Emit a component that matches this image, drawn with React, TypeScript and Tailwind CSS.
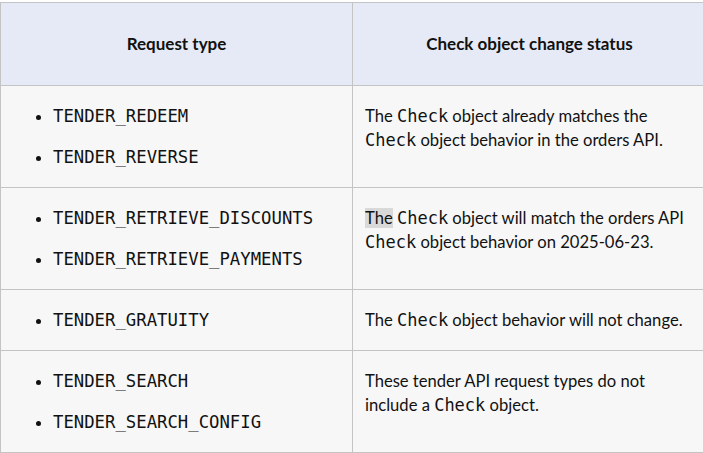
import React from "react";

const mono = "font-['DejaVu_Sans_Mono',monospace] text-[17.3px]";

function C() {
  return <code className="font-['DejaVu_Sans_Mono',monospace] text-[17px]">Check</code>;
}

const rows: { items: string[]; desc: React.ReactNode }[] = [
  {
    items: ["TENDER_REDEEM", "TENDER_REVERSE"],
    desc: (
      <>
        The <C /> object already matches the <C /> object behavior in the orders API.
      </>
    ),
  },
  {
    items: ["TENDER_RETRIEVE_DISCOUNTS", "TENDER_RETRIEVE_PAYMENTS"],
    desc: (
      <>
        <span className="bg-[#d9d9d9]">The</span> <C /> object will match the orders API <C /> object behavior on
        2025-06-23.
      </>
    ),
  },
  {
    items: ["TENDER_GRATUITY"],
    desc: (
      <>
        The <C /> object behavior will not change.
      </>
    ),
  },
  {
    items: ["TENDER_SEARCH", "TENDER_SEARCH_CONFIG"],
    desc: (
      <>
        These tender API request types do not include a <C /> object.
      </>
    ),
  },
];

export default function App() {
  return (
    <div className="w-[703px] h-[453px] overflow-hidden bg-white pt-[2px] font-['Lato',sans-serif] text-[#111]">
      <table className="w-[706px] table-fixed border-collapse">
        <colgroup>
          <col className="w-[352px]" />
          <col className="w-[354px]" />
        </colgroup>
        <thead>
          <tr className="bg-[#e6eaf6]">
            <th className="h-[83px] border border-[#c4c4c4] text-center text-[17px] font-bold">Request type</th>
            <th className="h-[83px] border border-[#c4c4c4] text-center text-[17px] font-bold">
              Check object change status
            </th>
          </tr>
        </thead>
        <tbody>
          {rows.map((r, i) => (
            <tr key={i} className="bg-[#f7f7f7]">
              <td className="border border-[#c4c4c4] px-3 pt-[18px] pb-[18px] align-top">
                <ul className="list-disc pl-10 flex flex-col gap-[17px]">
                  {r.items.map((it) => (
                    <li key={it} className={`${mono} leading-6`}>
                      {it}
                    </li>
                  ))}
                </ul>
              </td>
              <td className="border border-[#c4c4c4] px-3 pt-[18px] pb-[18px] align-top text-[16.6px] leading-6">
                {r.desc}
              </td>
            </tr>
          ))}
        </tbody>
      </table>
    </div>
  );
}
